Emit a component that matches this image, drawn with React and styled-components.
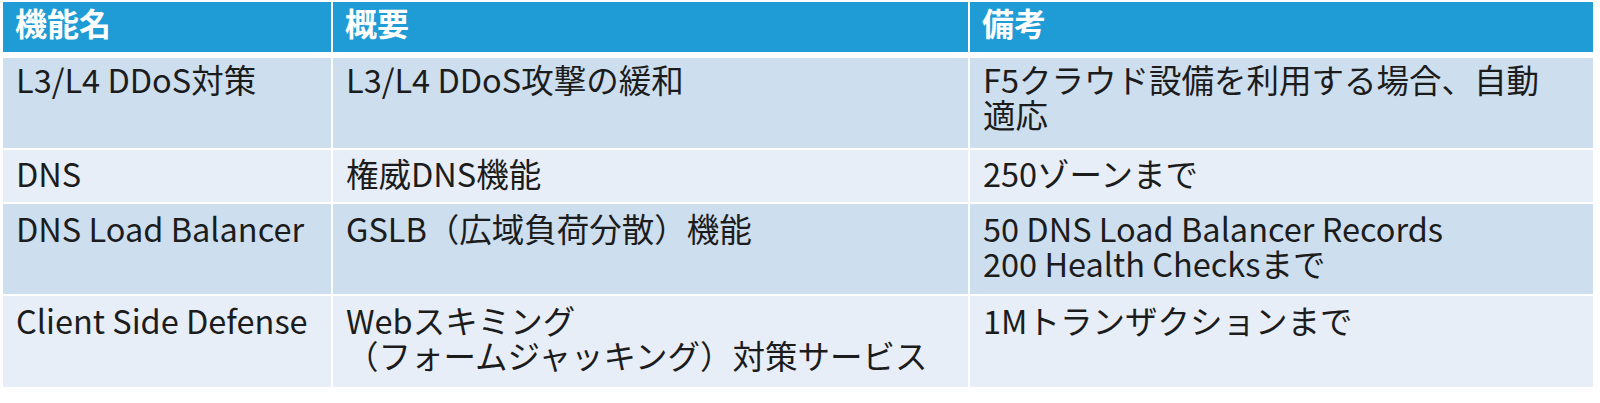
import React from "react";
import styled, { createGlobalStyle } from "styled-components";

const Global = createGlobalStyle`
  html, body { margin: 0; padding: 0; background: #ffffff; }
  body { font-family: "Noto Sans CJK JP", "Noto Sans", sans-serif; }
`;

const Table = styled.div`
  display: grid;
  grid-template-columns: 328px 635px 623px;
  column-gap: 2px;
  row-gap: 2px;
  margin: 2px 0 0 3px;
  width: 1590px;
`;

const HeadCell = styled.div`
  background: #1f9cd5;
  color: #ffffff;
  font-weight: 700;
  font-size: 32px;
  line-height: 36px;
  height: 50px;
  box-sizing: border-box;
  padding: 2px 12px 0 12px;
  margin-bottom: 4px;
  font-family: "Noto Sans CJK JP", "Noto Sans", sans-serif;
`;

const Cell = styled.div`
  background: ${(p) => (p.$dark ? "#cddeef" : "#e7eef7")};
  color: #1c1c1c;
  font-size: 32.5px;
  line-height: 35px;
  height: ${(p) => p.$h}px;
  box-sizing: border-box;
  padding: ${(p) => p.$pt}px 10px 0 13px;
  white-space: pre-line;
  font-family: "Noto Sans CJK JP", "Noto Sans", sans-serif;
`;

const rows = [
  { h: 90, pt: 3, dark: true, c: ["L3/L4 DDoS対策", "L3/L4 DDoS攻撃の緩和", "F5クラウド設備を利用する場合、自動\n適応"] },
  { h: 52, pt: 5, dark: false, c: ["DNS", "権威DNS機能", "250ゾーンまで"] },
  { h: 90, pt: 6, dark: true, c: ["DNS Load Balancer", "GSLB（広域負荷分散）機能", "50 DNS Load Balancer Records\n200 Health Checksまで"] },
  { h: 91, pt: 6, dark: false, c: ["Client Side Defense", "Webスキミング\n（フォームジャッキング）対策サービス", "1Mトランザクションまで"] },
];

export default function App() {
  return (
    <>
      <Global />
      <Table>
        <HeadCell>機能名</HeadCell>
        <HeadCell>概要</HeadCell>
        <HeadCell>備考</HeadCell>
        {rows.map((r, i) =>
          r.c.map((t, j) => (
            <Cell key={`${i}-${j}`} $dark={r.dark} $h={r.h} $pt={r.pt}>
              {t}
            </Cell>
          ))
        )}
      </Table>
    </>
  );
}
